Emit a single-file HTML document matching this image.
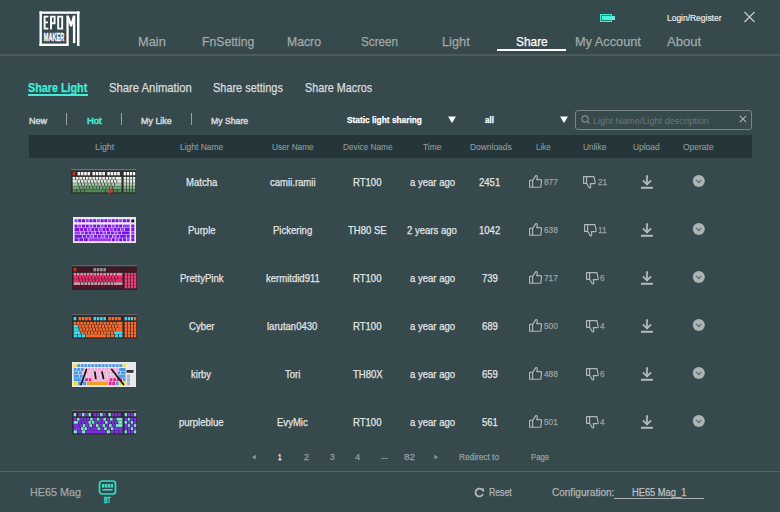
<!DOCTYPE html>
<html><head><meta charset="utf-8"><style>
html,body{margin:0;padding:0;}
body{width:780px;height:512px;overflow:hidden;position:relative;background:#36494d;font-family:"Liberation Sans",sans-serif;}
.t{position:absolute;white-space:nowrap;transform-origin:0 0;-webkit-text-stroke:0.25px currentColor;}
.r{position:absolute;}
</style></head><body>
<svg class="r" style="left:0;top:0" width="100" height="60" viewBox="0 0 100 60">
<g fill="#ffffff">
<rect x="39.5" y="11.5" width="40" height="2.3"/>
<rect x="39.5" y="11.5" width="2.4" height="34.5"/>
<rect x="39.5" y="43.6" width="29" height="2.4"/>
<rect x="77" y="11.5" width="2.5" height="34.5"/>
<rect x="66.4" y="15.7" width="2.3" height="30"/>
<rect x="72.9" y="15.7" width="2.4" height="27.5"/>
<path d="M66.4 15.7 H68.9 L71.1 22 L72.9 15.7 H75.3 L72 26.5 H70.2 Z"/>
</g>
<g stroke="#ffffff" stroke-width="1.9" fill="none">
<path d="M48.4 16.6 H44.6 V28.6 H48.4 M44.6 22.4 H48"/>
<path d="M51 29.4 V16.6 H54.6 V23.2 H51"/>
<path d="M58.2 16.6 H62.2 V28.6 H58.2 Z"/>
</g>
<text x="43.8" y="40.8" font-family="Liberation Sans" font-weight="bold" font-size="10" fill="#ffffff" stroke="#ffffff" stroke-width="0.35" textLength="20.4" lengthAdjust="spacingAndGlyphs">MAKER</text>
</svg>
<span class="t" style="left:137.90px;top:35.02px;font-size:13.5px;line-height:13.5px;color:#a3a9a9;transform:scaleX(0.9498);">Main</span>
<span class="t" style="left:201.50px;top:35.02px;font-size:13.5px;line-height:13.5px;color:#a3a9a9;transform:scaleX(0.9052);">FnSetting</span>
<span class="t" style="left:287.00px;top:35.02px;font-size:13.5px;line-height:13.5px;color:#a3a9a9;transform:scaleX(0.9066);">Macro</span>
<span class="t" style="left:361.00px;top:35.02px;font-size:13.5px;line-height:13.5px;color:#a3a9a9;transform:scaleX(0.8651);">Screen</span>
<span class="t" style="left:441.80px;top:35.02px;font-size:13.5px;line-height:13.5px;color:#a3a9a9;transform:scaleX(0.9464);">Light</span>
<span class="t" style="left:574.60px;top:35.02px;font-size:13.5px;line-height:13.5px;color:#a3a9a9;transform:scaleX(0.9444);">My Account</span>
<span class="t" style="left:666.70px;top:35.02px;font-size:13.5px;line-height:13.5px;color:#a3a9a9;transform:scaleX(0.9667);">About</span>
<span class="t" style="left:516.00px;top:35.02px;font-size:13.5px;line-height:13.5px;color:#ffffff;transform:scaleX(0.8801);">Share</span>
<div class="r" style="left:497px;top:49px;width:69px;height:2px;background:#ffffff;"></div>
<div class="r" style="left:0px;top:54px;width:780px;height:2px;background:#4e5a5b;"></div>
<div class="r" style="left:600px;top:14px;width:12px;height:8px;background:#38ecd0;"></div>
<div class="r" style="left:601px;top:15px;width:10px;height:6px;background:#2a8276;"></div>
<div class="r" style="left:602px;top:16px;width:9px;height:4px;background:#48f0d8;"></div>
<div class="r" style="left:612px;top:16px;width:3.3px;height:4.4px;background:#70e8d4;"></div>
<span class="t" style="left:667.00px;top:13.75px;font-size:8.3px;line-height:8.3px;color:#e6e9e9;transform:scaleX(1.0183);-webkit-text-stroke:0.2px #e6e9e9;">Login/Register</span>
<svg class="r" style="left:743px;top:11px" width="13" height="12" viewBox="0 0 13 12"><path d="M1.5 1 L11.5 11 M11.5 1 L1.5 11" stroke="#c5caca" stroke-width="1.3"/></svg>
<span class="t" style="left:28.40px;top:81.63px;font-size:12.2px;line-height:12.2px;color:#40ecd8;font-weight:bold;transform:scaleX(0.8836);">Share Light</span>
<div class="r" style="left:28px;top:94px;width:60px;height:2px;background:#40ecd8;"></div>
<span class="t" style="left:108.50px;top:81.63px;font-size:12.2px;line-height:12.2px;color:#d9dddd;transform:scaleX(0.9249);">Share Animation</span>
<span class="t" style="left:213.30px;top:81.63px;font-size:12.2px;line-height:12.2px;color:#d9dddd;transform:scaleX(0.8975);">Share settings</span>
<span class="t" style="left:304.60px;top:81.63px;font-size:12.2px;line-height:12.2px;color:#d9dddd;transform:scaleX(0.8849);">Share Macros</span>
<span class="t" style="left:29.00px;top:115.84px;font-size:9.6px;line-height:9.6px;color:#cdd2d2;transform:scaleX(0.9465);-webkit-text-stroke:0.55px currentColor;">New</span>
<span class="t" style="left:86.70px;top:115.84px;font-size:9.6px;line-height:9.6px;color:#40ecd8;transform:scaleX(0.9841);-webkit-text-stroke:0.55px currentColor;">Hot</span>
<span class="t" style="left:140.80px;top:115.84px;font-size:9.6px;line-height:9.6px;color:#cdd2d2;transform:scaleX(0.9313);-webkit-text-stroke:0.55px currentColor;">My Like</span>
<span class="t" style="left:211.30px;top:115.84px;font-size:9.6px;line-height:9.6px;color:#cdd2d2;transform:scaleX(0.9056);-webkit-text-stroke:0.55px currentColor;">My Share</span>
<div class="r" style="left:66px;top:113px;width:1px;height:12px;background:#9aa3a3;"></div>
<div class="r" style="left:121px;top:113px;width:1px;height:12px;background:#9aa3a3;"></div>
<div class="r" style="left:191px;top:113px;width:1px;height:12px;background:#9aa3a3;"></div>
<span class="t" style="left:347.30px;top:115.34px;font-size:9.6px;line-height:9.6px;color:#ffffff;font-weight:bold;transform:scaleX(0.8680);">Static light sharing</span>
<span class="t" style="left:485.00px;top:115.34px;font-size:9.6px;line-height:9.6px;color:#ffffff;font-weight:bold;transform:scaleX(0.8431);">all</span>
<svg class="r" style="left:447px;top:115px" width="10" height="9"><path d="M1 1.5 H9 L5 8 Z" fill="#ffffff"/></svg>
<svg class="r" style="left:559px;top:115px" width="10" height="9"><path d="M1 1.5 H9 L5 8 Z" fill="#ffffff"/></svg>
<div class="r" style="left:575px;top:110px;width:175px;height:17.5px;border:1px solid #7a8586;border-radius:3px;"></div>
<svg class="r" style="left:580px;top:114px" width="11" height="11"><circle cx="5" cy="5" r="3.1" stroke="#889191" stroke-width="1.1" fill="none"/><path d="M7.3 7.3 L9.3 9.3" stroke="#889191" stroke-width="1.2"/></svg>
<span class="t" style="left:593.00px;top:115.64px;font-size:9.6px;line-height:9.6px;color:#6c7778;transform:scaleX(0.9526);-webkit-text-stroke:0;">Light Name/Light description</span>
<svg class="r" style="left:738px;top:114px" width="10" height="10"><path d="M1.8 1.8 L8.2 8.2 M8.2 1.8 L1.8 8.2" stroke="#aab1b1" stroke-width="1.2"/></svg>
<div class="r" style="left:29px;top:135px;width:723px;height:22.5px;background:#24363a;"></div>
<span class="t" style="left:95.00px;top:142.88px;font-size:9.2px;line-height:9.2px;color:#939c9c;transform:scaleX(0.9676);-webkit-text-stroke:0.1px currentColor;">Light</span>
<span class="t" style="left:180.00px;top:142.88px;font-size:9.2px;line-height:9.2px;color:#939c9c;transform:scaleX(0.9203);-webkit-text-stroke:0.1px currentColor;">Light Name</span>
<span class="t" style="left:271.70px;top:142.88px;font-size:9.2px;line-height:9.2px;color:#939c9c;transform:scaleX(0.8942);-webkit-text-stroke:0.1px currentColor;">User Name</span>
<span class="t" style="left:342.70px;top:142.88px;font-size:9.2px;line-height:9.2px;color:#939c9c;transform:scaleX(0.8983);-webkit-text-stroke:0.1px currentColor;">Device Name</span>
<span class="t" style="left:423.30px;top:142.88px;font-size:9.2px;line-height:9.2px;color:#939c9c;transform:scaleX(0.9153);-webkit-text-stroke:0.1px currentColor;">Time</span>
<span class="t" style="left:470.00px;top:142.88px;font-size:9.2px;line-height:9.2px;color:#939c9c;transform:scaleX(0.9162);-webkit-text-stroke:0.1px currentColor;">Downloads</span>
<span class="t" style="left:536.00px;top:142.88px;font-size:9.2px;line-height:9.2px;color:#939c9c;transform:scaleX(0.8712);-webkit-text-stroke:0.1px currentColor;">Like</span>
<span class="t" style="left:583.30px;top:142.88px;font-size:9.2px;line-height:9.2px;color:#939c9c;transform:scaleX(0.9152);-webkit-text-stroke:0.1px currentColor;">Unlike</span>
<span class="t" style="left:633.30px;top:142.88px;font-size:9.2px;line-height:9.2px;color:#939c9c;transform:scaleX(0.9158);-webkit-text-stroke:0.1px currentColor;">Upload</span>
<span class="t" style="left:683.30px;top:142.88px;font-size:9.2px;line-height:9.2px;color:#939c9c;transform:scaleX(0.9236);-webkit-text-stroke:0.1px currentColor;">Operate</span>
<span class="t" style="left:185.85px;top:176.99px;font-size:10.6px;line-height:10.6px;color:#e3e6e6;transform:scaleX(0.9000);">Matcha</span>
<span class="t" style="left:269.71px;top:176.99px;font-size:10.6px;line-height:10.6px;color:#e3e6e6;transform:scaleX(0.9000);">camii.ramii</span>
<span class="t" style="left:353.27px;top:176.99px;font-size:10.6px;line-height:10.6px;color:#e3e6e6;transform:scaleX(0.9000);">RT100</span>
<span class="t" style="left:409.66px;top:176.99px;font-size:10.6px;line-height:10.6px;color:#e3e6e6;transform:scaleX(0.9000);">a year ago</span>
<span class="t" style="left:479.49px;top:176.99px;font-size:10.6px;line-height:10.6px;color:#e3e6e6;transform:scaleX(0.9000);">2451</span>
<svg class="r" style="left:528px;top:173.9px" width="15" height="15" viewBox="0 0 15 15"><g fill="none" stroke="#b3b9b9" stroke-width="1.15" stroke-linejoin="round"><rect x="1.6" y="6.2" width="3" height="7"/><path d="M4.6 6.4 L7.9 1.6 Q9.4 1.4 9.3 3.2 L8.8 5.6 H12.8 Q13.8 5.8 13.6 6.8 L12.8 13.2 H4.6"/></g></svg>
<span class="t" style="left:544.00px;top:177.55px;font-size:9.0px;line-height:9.0px;color:#99a1a1;transform:scaleX(0.9193);">877</span>
<svg class="r" style="left:582.40px;top:175px" width="15" height="15" viewBox="0 0 15 15"><g fill="none" stroke="#b3b9b9" stroke-width="1.15" stroke-linejoin="round"><rect x="1.6" y="1.6" width="3" height="6.8"/><path d="M4.6 8.2 L7.3 12.8 Q8.8 13 8.7 11.2 L8.4 8.6 H12.4 Q13.4 8.4 13.2 7.4 L11.9 1.6 H4.6"/></g></svg>
<span class="t" style="left:598.10px;top:177.75px;font-size:9.0px;line-height:9.0px;color:#99a1a1;transform:scaleX(0.9200);">21</span>
<svg class="r" style="left:640px;top:174px" width="14" height="16" viewBox="0 0 14 16"><path d="M7 1.3 V10" stroke="#b3b9b9" stroke-width="1.8"/><path d="M2.9 6.3 L7 10.4 L11.1 6.3" stroke="#b3b9b9" stroke-width="1.8" fill="none"/><rect x="1" y="12.8" width="12" height="2" fill="#b3b9b9"/></svg>
<svg class="r" style="left:692px;top:174px" width="14" height="14" viewBox="0 0 14 14"><circle cx="6.8" cy="7" r="6" fill="#adb3b3"/><path d="M4.2 6 L6.8 8.5 L9.4 6" stroke="#667172" stroke-width="1.4" fill="none"/></svg>
<svg class="r" style="left:71.3px;top:169px" width="65" height="24.5" viewBox="0 0 65 24.5"><rect x="0" y="0" width="65" height="24.5" fill="#2c2e2c"/><rect x="0" y="0" width="65" height="1.2" fill="#70746f"/><rect x="1.65" y="3.0" width="2.60" height="3.3" fill="#d42a2a"/><rect x="6.60" y="3.0" width="2.60" height="3.3" fill="#f6f6f6"/><rect x="9.90" y="3.0" width="2.60" height="3.3" fill="#f6f6f6"/><rect x="13.20" y="3.0" width="2.60" height="3.3" fill="#f6f6f6"/><rect x="16.50" y="3.0" width="2.60" height="3.3" fill="#f6f6f6"/><rect x="21.45" y="3.0" width="2.60" height="3.3" fill="#f6f6f6"/><rect x="24.75" y="3.0" width="2.60" height="3.3" fill="#f6f6f6"/><rect x="28.05" y="3.0" width="2.60" height="3.3" fill="#f6f6f6"/><rect x="31.35" y="3.0" width="2.60" height="3.3" fill="#f6f6f6"/><rect x="36.30" y="3.0" width="2.60" height="3.3" fill="#f6f6f6"/><rect x="39.60" y="3.0" width="2.60" height="3.3" fill="#f6f6f6"/><rect x="42.90" y="3.0" width="2.60" height="3.3" fill="#f6f6f6"/><rect x="46.20" y="3.0" width="2.60" height="3.3" fill="#f6f6f6"/><rect x="1.65" y="7.9" width="2.60" height="2.8" fill="#eef0ee"/><rect x="4.95" y="7.9" width="2.60" height="2.8" fill="#eef0ee"/><rect x="8.25" y="7.9" width="2.60" height="2.8" fill="#eef0ee"/><rect x="11.55" y="7.9" width="2.60" height="2.8" fill="#eef0ee"/><rect x="14.85" y="7.9" width="2.60" height="2.8" fill="#eef0ee"/><rect x="18.15" y="7.9" width="2.60" height="2.8" fill="#eef0ee"/><rect x="21.45" y="7.9" width="2.60" height="2.8" fill="#eef0ee"/><rect x="24.75" y="7.9" width="2.60" height="2.8" fill="#eef0ee"/><rect x="28.05" y="7.9" width="2.60" height="2.8" fill="#eef0ee"/><rect x="31.35" y="7.9" width="2.60" height="2.8" fill="#eef0ee"/><rect x="34.65" y="7.9" width="2.60" height="2.8" fill="#eef0ee"/><rect x="37.95" y="7.9" width="2.60" height="2.8" fill="#eef0ee"/><rect x="41.25" y="7.9" width="2.60" height="2.8" fill="#eef0ee"/><rect x="44.55" y="7.9" width="5.90" height="2.8" fill="#eef0ee"/><rect x="1.65" y="11.0" width="4.25" height="2.8" fill="#dfe8df"/><rect x="6.60" y="11.0" width="2.60" height="2.8" fill="#dfe8df"/><rect x="9.90" y="11.0" width="2.60" height="2.8" fill="#dfe8df"/><rect x="13.20" y="11.0" width="2.60" height="2.8" fill="#dfe8df"/><rect x="16.50" y="11.0" width="2.60" height="2.8" fill="#dfe8df"/><rect x="19.80" y="11.0" width="2.60" height="2.8" fill="#dfe8df"/><rect x="23.10" y="11.0" width="2.60" height="2.8" fill="#dfe8df"/><rect x="26.40" y="11.0" width="2.60" height="2.8" fill="#dfe8df"/><rect x="29.70" y="11.0" width="2.60" height="2.8" fill="#dfe8df"/><rect x="33.00" y="11.0" width="2.60" height="2.8" fill="#dfe8df"/><rect x="36.30" y="11.0" width="2.60" height="2.8" fill="#dfe8df"/><rect x="39.60" y="11.0" width="2.60" height="2.8" fill="#dfe8df"/><rect x="42.90" y="11.0" width="2.60" height="2.8" fill="#dfe8df"/><rect x="46.20" y="11.0" width="4.25" height="2.8" fill="#dfe8df"/><rect x="1.65" y="14.1" width="5.07" height="2.8" fill="#a8c8aa"/><rect x="7.42" y="14.1" width="2.60" height="2.8" fill="#a8c8aa"/><rect x="10.72" y="14.1" width="2.60" height="2.8" fill="#a8c8aa"/><rect x="14.03" y="14.1" width="2.60" height="2.8" fill="#a8c8aa"/><rect x="17.32" y="14.1" width="2.60" height="2.8" fill="#a8c8aa"/><rect x="20.62" y="14.1" width="2.60" height="2.8" fill="#a8c8aa"/><rect x="23.93" y="14.1" width="2.60" height="2.8" fill="#a8c8aa"/><rect x="27.23" y="14.1" width="2.60" height="2.8" fill="#a8c8aa"/><rect x="30.53" y="14.1" width="2.60" height="2.8" fill="#a8c8aa"/><rect x="33.82" y="14.1" width="2.60" height="2.8" fill="#a8c8aa"/><rect x="37.12" y="14.1" width="2.60" height="2.8" fill="#a8c8aa"/><rect x="40.42" y="14.1" width="2.60" height="2.8" fill="#a8c8aa"/><rect x="43.72" y="14.1" width="6.72" height="2.8" fill="#a8c8aa"/><rect x="1.65" y="17.2" width="6.72" height="2.8" fill="#72a077"/><rect x="9.07" y="17.2" width="2.60" height="2.8" fill="#72a077"/><rect x="12.38" y="17.2" width="2.60" height="2.8" fill="#72a077"/><rect x="15.67" y="17.2" width="2.60" height="2.8" fill="#72a077"/><rect x="18.98" y="17.2" width="2.60" height="2.8" fill="#72a077"/><rect x="22.28" y="17.2" width="2.60" height="2.8" fill="#72a077"/><rect x="25.57" y="17.2" width="2.60" height="2.8" fill="#72a077"/><rect x="28.88" y="17.2" width="2.60" height="2.8" fill="#72a077"/><rect x="32.17" y="17.2" width="2.60" height="2.8" fill="#72a077"/><rect x="35.47" y="17.2" width="2.60" height="2.8" fill="#72a077"/><rect x="38.77" y="17.2" width="2.60" height="2.8" fill="#72a077"/><rect x="42.07" y="17.2" width="8.38" height="2.8" fill="#72a077"/><rect x="1.65" y="20.3" width="3.42" height="3.0" fill="#4f8a56"/><rect x="5.77" y="20.3" width="3.42" height="3.0" fill="#4f8a56"/><rect x="9.90" y="20.3" width="3.42" height="3.0" fill="#4f8a56"/><rect x="14.03" y="20.3" width="19.93" height="3.0" fill="#4f8a56"/><rect x="34.65" y="20.3" width="3.42" height="3.0" fill="#4f8a56"/><rect x="38.77" y="20.3" width="3.42" height="3.0" fill="#4f8a56"/><rect x="42.90" y="20.3" width="3.42" height="3.0" fill="#4f8a56"/><rect x="47.02" y="20.3" width="3.42" height="3.0" fill="#4f8a56"/><rect x="52.63" y="3.0" width="2.37" height="3.3" fill="#f6f6f6"/><rect x="55.70" y="3.0" width="2.37" height="3.3" fill="#f6f6f6"/><rect x="58.77" y="3.0" width="2.37" height="3.3" fill="#f6f6f6"/><rect x="61.84" y="3.0" width="2.37" height="3.3" fill="#f6f6f6"/><rect x="52.63" y="7.9" width="2.37" height="2.8" fill="#eef0ee"/><rect x="55.70" y="7.9" width="2.37" height="2.8" fill="#eef0ee"/><rect x="58.77" y="7.9" width="2.37" height="2.8" fill="#eef0ee"/><rect x="61.84" y="7.9" width="2.37" height="2.8" fill="#eef0ee"/><rect x="52.63" y="11.0" width="2.37" height="2.8" fill="#dfe8df"/><rect x="55.70" y="11.0" width="2.37" height="2.8" fill="#dfe8df"/><rect x="58.77" y="11.0" width="2.37" height="2.8" fill="#dfe8df"/><rect x="61.84" y="11.0" width="2.37" height="2.8" fill="#dfe8df"/><rect x="52.63" y="14.1" width="2.37" height="2.8" fill="#b8d0b8"/><rect x="55.70" y="14.1" width="2.37" height="2.8" fill="#b8d0b8"/><rect x="58.77" y="14.1" width="2.37" height="2.8" fill="#b8d0b8"/><rect x="61.84" y="14.1" width="2.37" height="2.8" fill="#b8d0b8"/><rect x="52.63" y="17.2" width="2.37" height="2.8" fill="#8ab08c"/><rect x="55.70" y="17.2" width="2.37" height="2.8" fill="#8ab08c"/><rect x="58.77" y="17.2" width="2.37" height="2.8" fill="#8ab08c"/><rect x="61.84" y="17.2" width="2.37" height="2.8" fill="#8ab08c"/><rect x="52.63" y="20.3" width="2.37" height="3.0" fill="#5f9464"/><rect x="55.70" y="20.3" width="2.37" height="3.0" fill="#5f9464"/><rect x="58.77" y="20.3" width="2.37" height="3.0" fill="#5f9464"/><rect x="61.84" y="20.3" width="2.37" height="3.0" fill="#5f9464"/><rect x="37.5" y="19.5" width="2.2" height="5" fill="#d03030"/><rect x="40.5" y="19.5" width="1.2" height="4" fill="#c83030"/></svg>
<span class="t" style="left:187.71px;top:224.99px;font-size:10.6px;line-height:10.6px;color:#e3e6e6;transform:scaleX(0.9000);">Purple</span>
<span class="t" style="left:272.88px;top:224.99px;font-size:10.6px;line-height:10.6px;color:#e3e6e6;transform:scaleX(0.9000);">Pickering</span>
<span class="t" style="left:348.15px;top:224.99px;font-size:10.6px;line-height:10.6px;color:#e3e6e6;transform:scaleX(0.9000);">TH80 SE</span>
<span class="t" style="left:407.27px;top:224.99px;font-size:10.6px;line-height:10.6px;color:#e3e6e6;transform:scaleX(0.9000);">2 years ago</span>
<span class="t" style="left:479.49px;top:224.99px;font-size:10.6px;line-height:10.6px;color:#e3e6e6;transform:scaleX(0.9000);">1042</span>
<svg class="r" style="left:528px;top:221.9px" width="15" height="15" viewBox="0 0 15 15"><g fill="none" stroke="#b3b9b9" stroke-width="1.15" stroke-linejoin="round"><rect x="1.6" y="6.2" width="3" height="7"/><path d="M4.6 6.4 L7.9 1.6 Q9.4 1.4 9.3 3.2 L8.8 5.6 H12.8 Q13.8 5.8 13.6 6.8 L12.8 13.2 H4.6"/></g></svg>
<span class="t" style="left:544.00px;top:225.55px;font-size:9.0px;line-height:9.0px;color:#99a1a1;transform:scaleX(0.9193);">638</span>
<svg class="r" style="left:582.70px;top:223px" width="15" height="15" viewBox="0 0 15 15"><g fill="none" stroke="#b3b9b9" stroke-width="1.15" stroke-linejoin="round"><rect x="1.6" y="1.6" width="3" height="6.8"/><path d="M4.6 8.2 L7.3 12.8 Q8.8 13 8.7 11.2 L8.4 8.6 H12.4 Q13.4 8.4 13.2 7.4 L11.9 1.6 H4.6"/></g></svg>
<span class="t" style="left:598.40px;top:225.75px;font-size:9.0px;line-height:9.0px;color:#99a1a1;transform:scaleX(0.9200);">11</span>
<svg class="r" style="left:640px;top:222px" width="14" height="16" viewBox="0 0 14 16"><path d="M7 1.3 V10" stroke="#b3b9b9" stroke-width="1.8"/><path d="M2.9 6.3 L7 10.4 L11.1 6.3" stroke="#b3b9b9" stroke-width="1.8" fill="none"/><rect x="1" y="12.8" width="12" height="2" fill="#b3b9b9"/></svg>
<svg class="r" style="left:692px;top:222px" width="14" height="14" viewBox="0 0 14 14"><circle cx="6.8" cy="7" r="6" fill="#adb3b3"/><path d="M4.2 6 L6.8 8.5 L9.4 6" stroke="#667172" stroke-width="1.4" fill="none"/></svg>
<svg class="r" style="left:72.5px;top:216.5px" width="63" height="26" viewBox="0 0 63 26"><rect x="0" y="0" width="63" height="26" fill="#ece6f0"/><rect x="1.55" y="2.2" width="3.02" height="3.0" fill="#9a3cf4"/><rect x="5.27" y="2.2" width="3.02" height="3.0" fill="#7a12e6"/><rect x="8.99" y="2.2" width="3.02" height="3.0" fill="#7a12e6"/><rect x="12.71" y="2.2" width="3.02" height="3.0" fill="#9a3cf4"/><rect x="16.43" y="2.2" width="3.02" height="3.0" fill="#7a12e6"/><rect x="20.15" y="2.2" width="3.02" height="3.0" fill="#7a12e6"/><rect x="23.87" y="2.2" width="3.02" height="3.0" fill="#9a3cf4"/><rect x="27.59" y="2.2" width="3.02" height="3.0" fill="#7a12e6"/><rect x="31.31" y="2.2" width="3.02" height="3.0" fill="#7a12e6"/><rect x="35.03" y="2.2" width="3.02" height="3.0" fill="#9a3cf4"/><rect x="38.75" y="2.2" width="3.02" height="3.0" fill="#7a12e6"/><rect x="42.47" y="2.2" width="3.02" height="3.0" fill="#7a12e6"/><rect x="46.19" y="2.2" width="3.02" height="3.0" fill="#9a3cf4"/><rect x="49.91" y="2.2" width="3.02" height="3.0" fill="#7a12e6"/><rect x="53.63" y="2.2" width="3.02" height="3.0" fill="#7a12e6"/><rect x="1.55" y="7.6" width="3.02" height="3.0" fill="#7a12e6"/><rect x="5.27" y="7.6" width="3.02" height="3.0" fill="#9a3cf4"/><rect x="8.99" y="7.6" width="3.02" height="3.0" fill="#7a12e6"/><rect x="12.71" y="7.6" width="3.02" height="3.0" fill="#7a12e6"/><rect x="16.43" y="7.6" width="3.02" height="3.0" fill="#9a3cf4"/><rect x="20.15" y="7.6" width="3.02" height="3.0" fill="#7a12e6"/><rect x="23.87" y="7.6" width="3.02" height="3.0" fill="#7a12e6"/><rect x="27.59" y="7.6" width="3.02" height="3.0" fill="#9a3cf4"/><rect x="31.31" y="7.6" width="3.02" height="3.0" fill="#7a12e6"/><rect x="35.03" y="7.6" width="3.02" height="3.0" fill="#7a12e6"/><rect x="38.75" y="7.6" width="3.02" height="3.0" fill="#9a3cf4"/><rect x="42.47" y="7.6" width="3.02" height="3.0" fill="#7a12e6"/><rect x="46.19" y="7.6" width="3.02" height="3.0" fill="#7a12e6"/><rect x="49.91" y="7.6" width="6.74" height="3.0" fill="#9a3cf4"/><rect x="1.55" y="11.0" width="4.88" height="3.0" fill="#7a12e6"/><rect x="7.13" y="11.0" width="3.02" height="3.0" fill="#7a12e6"/><rect x="10.85" y="11.0" width="3.02" height="3.0" fill="#7a12e6"/><rect x="14.57" y="11.0" width="3.02" height="3.0" fill="#9a3cf4"/><rect x="18.29" y="11.0" width="3.02" height="3.0" fill="#7a12e6"/><rect x="22.01" y="11.0" width="3.02" height="3.0" fill="#7a12e6"/><rect x="25.73" y="11.0" width="3.02" height="3.0" fill="#9a3cf4"/><rect x="29.45" y="11.0" width="3.02" height="3.0" fill="#7a12e6"/><rect x="33.17" y="11.0" width="3.02" height="3.0" fill="#7a12e6"/><rect x="36.89" y="11.0" width="3.02" height="3.0" fill="#9a3cf4"/><rect x="40.61" y="11.0" width="3.02" height="3.0" fill="#7a12e6"/><rect x="44.33" y="11.0" width="3.02" height="3.0" fill="#7a12e6"/><rect x="48.05" y="11.0" width="3.02" height="3.0" fill="#9a3cf4"/><rect x="51.77" y="11.0" width="4.88" height="3.0" fill="#7a12e6"/><rect x="1.55" y="14.4" width="5.81" height="3.0" fill="#9a3cf4"/><rect x="8.06" y="14.4" width="3.02" height="3.0" fill="#9a3cf4"/><rect x="11.78" y="14.4" width="3.02" height="3.0" fill="#7a12e6"/><rect x="15.50" y="14.4" width="3.02" height="3.0" fill="#7a12e6"/><rect x="19.22" y="14.4" width="3.02" height="3.0" fill="#9a3cf4"/><rect x="22.94" y="14.4" width="3.02" height="3.0" fill="#7a12e6"/><rect x="26.66" y="14.4" width="3.02" height="3.0" fill="#7a12e6"/><rect x="30.38" y="14.4" width="3.02" height="3.0" fill="#9a3cf4"/><rect x="34.10" y="14.4" width="3.02" height="3.0" fill="#7a12e6"/><rect x="37.82" y="14.4" width="3.02" height="3.0" fill="#7a12e6"/><rect x="41.54" y="14.4" width="3.02" height="3.0" fill="#9a3cf4"/><rect x="45.26" y="14.4" width="3.02" height="3.0" fill="#7a12e6"/><rect x="48.98" y="14.4" width="7.67" height="3.0" fill="#7a12e6"/><rect x="1.55" y="17.8" width="7.67" height="3.0" fill="#7a12e6"/><rect x="9.92" y="17.8" width="3.02" height="3.0" fill="#7a12e6"/><rect x="13.64" y="17.8" width="3.02" height="3.0" fill="#7a12e6"/><rect x="17.36" y="17.8" width="3.02" height="3.0" fill="#9a3cf4"/><rect x="21.08" y="17.8" width="3.02" height="3.0" fill="#7a12e6"/><rect x="24.80" y="17.8" width="3.02" height="3.0" fill="#7a12e6"/><rect x="28.52" y="17.8" width="3.02" height="3.0" fill="#9a3cf4"/><rect x="32.24" y="17.8" width="3.02" height="3.0" fill="#7a12e6"/><rect x="35.96" y="17.8" width="3.02" height="3.0" fill="#7a12e6"/><rect x="39.68" y="17.8" width="3.02" height="3.0" fill="#9a3cf4"/><rect x="43.40" y="17.8" width="3.02" height="3.0" fill="#7a12e6"/><rect x="47.12" y="17.8" width="5.81" height="3.0" fill="#7a12e6"/><rect x="53.63" y="17.8" width="3.02" height="3.0" fill="#7a12e6"/><rect x="1.55" y="21.2" width="3.95" height="3.0" fill="#7a12e6"/><rect x="6.20" y="21.2" width="3.95" height="3.0" fill="#7a12e6"/><rect x="10.85" y="21.2" width="3.95" height="3.0" fill="#7a12e6"/><rect x="15.50" y="21.2" width="22.55" height="3.0" fill="#9a3cf4"/><rect x="38.75" y="21.2" width="3.02" height="3.0" fill="#7a12e6"/><rect x="42.47" y="21.2" width="3.02" height="3.0" fill="#9a3cf4"/><rect x="46.19" y="21.2" width="3.02" height="3.0" fill="#7a12e6"/><rect x="49.91" y="21.2" width="3.02" height="3.0" fill="#7a12e6"/><rect x="53.63" y="21.2" width="3.02" height="3.0" fill="#9a3cf4"/><rect x="58.28" y="7.6" width="3.02" height="3.0" fill="#7a12e6"/><rect x="58.28" y="11.0" width="3.02" height="3.0" fill="#7a12e6"/><rect x="58.28" y="14.4" width="3.02" height="3.0" fill="#9a3cf4"/><rect x="58.28" y="17.8" width="3.02" height="3.0" fill="#7a12e6"/><rect x="58.28" y="21.2" width="3.02" height="3.0" fill="#7a12e6"/><circle cx="59.8" cy="3.9" r="1.6" fill="#111"/></svg>
<span class="t" style="left:179.75px;top:272.99px;font-size:10.6px;line-height:10.6px;color:#e3e6e6;transform:scaleX(0.9000);">PrettyPink</span>
<span class="t" style="left:265.54px;top:272.99px;font-size:10.6px;line-height:10.6px;color:#e3e6e6;transform:scaleX(0.9000);">kermitdid911</span>
<span class="t" style="left:353.27px;top:272.99px;font-size:10.6px;line-height:10.6px;color:#e3e6e6;transform:scaleX(0.9000);">RT100</span>
<span class="t" style="left:409.66px;top:272.99px;font-size:10.6px;line-height:10.6px;color:#e3e6e6;transform:scaleX(0.9000);">a year ago</span>
<span class="t" style="left:482.14px;top:272.99px;font-size:10.6px;line-height:10.6px;color:#e3e6e6;transform:scaleX(0.9000);">739</span>
<svg class="r" style="left:528px;top:269.9px" width="15" height="15" viewBox="0 0 15 15"><g fill="none" stroke="#b3b9b9" stroke-width="1.15" stroke-linejoin="round"><rect x="1.6" y="6.2" width="3" height="7"/><path d="M4.6 6.4 L7.9 1.6 Q9.4 1.4 9.3 3.2 L8.8 5.6 H12.8 Q13.8 5.8 13.6 6.8 L12.8 13.2 H4.6"/></g></svg>
<span class="t" style="left:544.00px;top:273.55px;font-size:9.0px;line-height:9.0px;color:#99a1a1;transform:scaleX(0.9193);">717</span>
<svg class="r" style="left:584.70px;top:271px" width="15" height="15" viewBox="0 0 15 15"><g fill="none" stroke="#b3b9b9" stroke-width="1.15" stroke-linejoin="round"><rect x="1.6" y="1.6" width="3" height="6.8"/><path d="M4.6 8.2 L7.3 12.8 Q8.8 13 8.7 11.2 L8.4 8.6 H12.4 Q13.4 8.4 13.2 7.4 L11.9 1.6 H4.6"/></g></svg>
<span class="t" style="left:600.40px;top:273.75px;font-size:9.0px;line-height:9.0px;color:#99a1a1;transform:scaleX(0.9200);">6</span>
<svg class="r" style="left:640px;top:270px" width="14" height="16" viewBox="0 0 14 16"><path d="M7 1.3 V10" stroke="#b3b9b9" stroke-width="1.8"/><path d="M2.9 6.3 L7 10.4 L11.1 6.3" stroke="#b3b9b9" stroke-width="1.8" fill="none"/><rect x="1" y="12.8" width="12" height="2" fill="#b3b9b9"/></svg>
<svg class="r" style="left:692px;top:270px" width="14" height="14" viewBox="0 0 14 14"><circle cx="6.8" cy="7" r="6" fill="#adb3b3"/><path d="M4.2 6 L6.8 8.5 L9.4 6" stroke="#667172" stroke-width="1.4" fill="none"/></svg>
<svg class="r" style="left:71.5px;top:264.5px" width="65" height="25" viewBox="0 0 65 25"><rect x="0" y="0" width="65" height="25" fill="#2e2226"/><rect x="0" y="0" width="65" height="1.2" fill="#6a6265"/><rect x="1.65" y="3.0" width="2.60" height="3.3" fill="#e02a2a"/><rect x="6.60" y="3.0" width="2.60" height="3.3" fill="#4a1424"/><rect x="9.90" y="3.0" width="2.60" height="3.3" fill="#4a1424"/><rect x="13.20" y="3.0" width="2.60" height="3.3" fill="#4a1424"/><rect x="16.50" y="3.0" width="2.60" height="3.3" fill="#4a1424"/><rect x="21.45" y="3.0" width="2.60" height="3.3" fill="#9a8a90"/><rect x="24.75" y="3.0" width="2.60" height="3.3" fill="#9a8a90"/><rect x="28.05" y="3.0" width="2.60" height="3.3" fill="#9a8a90"/><rect x="31.35" y="3.0" width="2.60" height="3.3" fill="#9a8a90"/><rect x="36.30" y="3.0" width="2.60" height="3.3" fill="#4a1424"/><rect x="39.60" y="3.0" width="2.60" height="3.3" fill="#4a1424"/><rect x="42.90" y="3.0" width="2.60" height="3.3" fill="#4a1424"/><rect x="46.20" y="3.0" width="2.60" height="3.3" fill="#4a1424"/><rect x="1.65" y="7.9" width="2.60" height="2.8" fill="#ee86aa"/><rect x="4.95" y="7.9" width="2.60" height="2.8" fill="#ee86aa"/><rect x="8.25" y="7.9" width="2.60" height="2.8" fill="#ee86aa"/><rect x="11.55" y="7.9" width="2.60" height="2.8" fill="#ee86aa"/><rect x="14.85" y="7.9" width="2.60" height="2.8" fill="#ee86aa"/><rect x="18.15" y="7.9" width="2.60" height="2.8" fill="#ee86aa"/><rect x="21.45" y="7.9" width="2.60" height="2.8" fill="#ee86aa"/><rect x="24.75" y="7.9" width="2.60" height="2.8" fill="#ee86aa"/><rect x="28.05" y="7.9" width="2.60" height="2.8" fill="#ee86aa"/><rect x="31.35" y="7.9" width="2.60" height="2.8" fill="#ee86aa"/><rect x="34.65" y="7.9" width="2.60" height="2.8" fill="#ee86aa"/><rect x="37.95" y="7.9" width="2.60" height="2.8" fill="#ee86aa"/><rect x="41.25" y="7.9" width="2.60" height="2.8" fill="#ee86aa"/><rect x="44.55" y="7.9" width="5.90" height="2.8" fill="#ee86aa"/><rect x="1.65" y="11.0" width="4.25" height="2.8" fill="#ff2470"/><rect x="6.60" y="11.0" width="2.60" height="2.8" fill="#ff2470"/><rect x="9.90" y="11.0" width="2.60" height="2.8" fill="#ff2470"/><rect x="13.20" y="11.0" width="2.60" height="2.8" fill="#ff2470"/><rect x="16.50" y="11.0" width="2.60" height="2.8" fill="#ff2470"/><rect x="19.80" y="11.0" width="2.60" height="2.8" fill="#ff2470"/><rect x="23.10" y="11.0" width="2.60" height="2.8" fill="#ff2470"/><rect x="26.40" y="11.0" width="2.60" height="2.8" fill="#ff2470"/><rect x="29.70" y="11.0" width="2.60" height="2.8" fill="#ff2470"/><rect x="33.00" y="11.0" width="2.60" height="2.8" fill="#ff2470"/><rect x="36.30" y="11.0" width="2.60" height="2.8" fill="#ff2470"/><rect x="39.60" y="11.0" width="2.60" height="2.8" fill="#ff2470"/><rect x="42.90" y="11.0" width="2.60" height="2.8" fill="#ff2470"/><rect x="46.20" y="11.0" width="4.25" height="2.8" fill="#ff2470"/><rect x="1.65" y="14.1" width="5.07" height="2.8" fill="#ec2a6c"/><rect x="7.42" y="14.1" width="2.60" height="2.8" fill="#ec2a6c"/><rect x="10.72" y="14.1" width="2.60" height="2.8" fill="#ec2a6c"/><rect x="14.03" y="14.1" width="2.60" height="2.8" fill="#ec2a6c"/><rect x="17.32" y="14.1" width="2.60" height="2.8" fill="#ec2a6c"/><rect x="20.62" y="14.1" width="2.60" height="2.8" fill="#ec2a6c"/><rect x="23.93" y="14.1" width="2.60" height="2.8" fill="#ec2a6c"/><rect x="27.23" y="14.1" width="2.60" height="2.8" fill="#ec2a6c"/><rect x="30.53" y="14.1" width="2.60" height="2.8" fill="#ec2a6c"/><rect x="33.82" y="14.1" width="2.60" height="2.8" fill="#ec2a6c"/><rect x="37.12" y="14.1" width="2.60" height="2.8" fill="#ec2a6c"/><rect x="40.42" y="14.1" width="2.60" height="2.8" fill="#ec2a6c"/><rect x="43.72" y="14.1" width="6.72" height="2.8" fill="#ec2a6c"/><rect x="1.65" y="17.2" width="6.72" height="2.8" fill="#c89aab"/><rect x="9.07" y="17.2" width="2.60" height="2.8" fill="#c89aab"/><rect x="12.38" y="17.2" width="2.60" height="2.8" fill="#c89aab"/><rect x="15.67" y="17.2" width="2.60" height="2.8" fill="#c89aab"/><rect x="18.98" y="17.2" width="2.60" height="2.8" fill="#c89aab"/><rect x="22.28" y="17.2" width="2.60" height="2.8" fill="#c89aab"/><rect x="25.57" y="17.2" width="2.60" height="2.8" fill="#c89aab"/><rect x="28.88" y="17.2" width="2.60" height="2.8" fill="#c89aab"/><rect x="32.17" y="17.2" width="2.60" height="2.8" fill="#c89aab"/><rect x="35.47" y="17.2" width="2.60" height="2.8" fill="#c89aab"/><rect x="38.77" y="17.2" width="2.60" height="2.8" fill="#c89aab"/><rect x="42.07" y="17.2" width="8.38" height="2.8" fill="#c89aab"/><rect x="1.65" y="20.3" width="3.42" height="3.0" fill="#5e1228"/><rect x="5.77" y="20.3" width="3.42" height="3.0" fill="#5e1228"/><rect x="9.90" y="20.3" width="3.42" height="3.0" fill="#5e1228"/><rect x="14.03" y="20.3" width="19.93" height="3.0" fill="#5e1228"/><rect x="34.65" y="20.3" width="3.42" height="3.0" fill="#5e1228"/><rect x="38.77" y="20.3" width="3.42" height="3.0" fill="#5e1228"/><rect x="42.90" y="20.3" width="3.42" height="3.0" fill="#5e1228"/><rect x="47.02" y="20.3" width="3.42" height="3.0" fill="#5e1228"/><rect x="52.63" y="3.0" width="2.37" height="3.3" fill="#4a1424"/><rect x="55.70" y="3.0" width="2.37" height="3.3" fill="#4a1424"/><rect x="58.77" y="3.0" width="2.37" height="3.3" fill="#4a1424"/><rect x="61.84" y="3.0" width="2.37" height="3.3" fill="#4a1424"/><rect x="52.63" y="7.9" width="2.37" height="2.8" fill="#f0407c"/><rect x="55.70" y="7.9" width="2.37" height="2.8" fill="#f0407c"/><rect x="58.77" y="7.9" width="2.37" height="2.8" fill="#f0407c"/><rect x="61.84" y="7.9" width="2.37" height="2.8" fill="#f0407c"/><rect x="52.63" y="11.0" width="2.37" height="2.8" fill="#f0407c"/><rect x="55.70" y="11.0" width="2.37" height="2.8" fill="#f0407c"/><rect x="58.77" y="11.0" width="2.37" height="2.8" fill="#f0407c"/><rect x="61.84" y="11.0" width="2.37" height="2.8" fill="#f0407c"/><rect x="52.63" y="14.1" width="2.37" height="2.8" fill="#f0407c"/><rect x="55.70" y="14.1" width="2.37" height="2.8" fill="#f0407c"/><rect x="58.77" y="14.1" width="2.37" height="2.8" fill="#f0407c"/><rect x="61.84" y="14.1" width="2.37" height="2.8" fill="#f0407c"/><rect x="52.63" y="17.2" width="2.37" height="2.8" fill="#f0407c"/><rect x="55.70" y="17.2" width="2.37" height="2.8" fill="#f0407c"/><rect x="58.77" y="17.2" width="2.37" height="2.8" fill="#f0407c"/><rect x="61.84" y="17.2" width="2.37" height="2.8" fill="#f0407c"/><rect x="52.63" y="20.3" width="2.37" height="3.0" fill="#f0407c"/><rect x="55.70" y="20.3" width="2.37" height="3.0" fill="#f0407c"/><rect x="58.77" y="20.3" width="2.37" height="3.0" fill="#f0407c"/><rect x="61.84" y="20.3" width="2.37" height="3.0" fill="#f0407c"/></svg>
<span class="t" style="left:188.77px;top:320.99px;font-size:10.6px;line-height:10.6px;color:#e3e6e6;transform:scaleX(0.9000);">Cyber</span>
<span class="t" style="left:267.30px;top:320.99px;font-size:10.6px;line-height:10.6px;color:#e3e6e6;transform:scaleX(0.9000);">larutan0430</span>
<span class="t" style="left:353.27px;top:320.99px;font-size:10.6px;line-height:10.6px;color:#e3e6e6;transform:scaleX(0.9000);">RT100</span>
<span class="t" style="left:409.66px;top:320.99px;font-size:10.6px;line-height:10.6px;color:#e3e6e6;transform:scaleX(0.9000);">a year ago</span>
<span class="t" style="left:482.14px;top:320.99px;font-size:10.6px;line-height:10.6px;color:#e3e6e6;transform:scaleX(0.9000);">689</span>
<svg class="r" style="left:528px;top:317.9px" width="15" height="15" viewBox="0 0 15 15"><g fill="none" stroke="#b3b9b9" stroke-width="1.15" stroke-linejoin="round"><rect x="1.6" y="6.2" width="3" height="7"/><path d="M4.6 6.4 L7.9 1.6 Q9.4 1.4 9.3 3.2 L8.8 5.6 H12.8 Q13.8 5.8 13.6 6.8 L12.8 13.2 H4.6"/></g></svg>
<span class="t" style="left:544.00px;top:321.55px;font-size:9.0px;line-height:9.0px;color:#99a1a1;transform:scaleX(0.9193);">500</span>
<svg class="r" style="left:584.70px;top:319px" width="15" height="15" viewBox="0 0 15 15"><g fill="none" stroke="#b3b9b9" stroke-width="1.15" stroke-linejoin="round"><rect x="1.6" y="1.6" width="3" height="6.8"/><path d="M4.6 8.2 L7.3 12.8 Q8.8 13 8.7 11.2 L8.4 8.6 H12.4 Q13.4 8.4 13.2 7.4 L11.9 1.6 H4.6"/></g></svg>
<span class="t" style="left:600.40px;top:321.75px;font-size:9.0px;line-height:9.0px;color:#99a1a1;transform:scaleX(0.9200);">4</span>
<svg class="r" style="left:640px;top:318px" width="14" height="16" viewBox="0 0 14 16"><path d="M7 1.3 V10" stroke="#b3b9b9" stroke-width="1.8"/><path d="M2.9 6.3 L7 10.4 L11.1 6.3" stroke="#b3b9b9" stroke-width="1.8" fill="none"/><rect x="1" y="12.8" width="12" height="2" fill="#b3b9b9"/></svg>
<svg class="r" style="left:692px;top:318px" width="14" height="14" viewBox="0 0 14 14"><circle cx="6.8" cy="7" r="6" fill="#adb3b3"/><path d="M4.2 6 L6.8 8.5 L9.4 6" stroke="#667172" stroke-width="1.4" fill="none"/></svg>
<svg class="r" style="left:71.5px;top:314px" width="65" height="24.5" viewBox="0 0 65 24.5"><rect x="0" y="0" width="65" height="24.5" fill="#2a2a30"/><rect x="0" y="0" width="65" height="1.2" fill="#5e5e62"/><rect x="1.65" y="3.0" width="2.60" height="3.3" fill="#3ad8ea"/><rect x="6.60" y="3.0" width="2.60" height="3.3" fill="#ff6a24"/><rect x="9.90" y="3.0" width="2.60" height="3.3" fill="#ff6a24"/><rect x="13.20" y="3.0" width="2.60" height="3.3" fill="#ff6a24"/><rect x="16.50" y="3.0" width="2.60" height="3.3" fill="#ff6a24"/><rect x="21.45" y="3.0" width="2.60" height="3.3" fill="#3ad8ea"/><rect x="24.75" y="3.0" width="2.60" height="3.3" fill="#3ad8ea"/><rect x="28.05" y="3.0" width="2.60" height="3.3" fill="#3ad8ea"/><rect x="31.35" y="3.0" width="2.60" height="3.3" fill="#3ad8ea"/><rect x="36.30" y="3.0" width="2.60" height="3.3" fill="#ff6a24"/><rect x="39.60" y="3.0" width="2.60" height="3.3" fill="#ff6a24"/><rect x="42.90" y="3.0" width="2.60" height="3.3" fill="#ff6a24"/><rect x="46.20" y="3.0" width="2.60" height="3.3" fill="#ff6a24"/><rect x="1.65" y="7.9" width="2.60" height="2.8" fill="#ff6a24"/><rect x="4.95" y="7.9" width="2.60" height="2.8" fill="#ff6a24"/><rect x="8.25" y="7.9" width="2.60" height="2.8" fill="#ff6a24"/><rect x="11.55" y="7.9" width="2.60" height="2.8" fill="#ff6a24"/><rect x="14.85" y="7.9" width="2.60" height="2.8" fill="#ff6a24"/><rect x="18.15" y="7.9" width="2.60" height="2.8" fill="#ff6a24"/><rect x="21.45" y="7.9" width="2.60" height="2.8" fill="#ff6a24"/><rect x="24.75" y="7.9" width="2.60" height="2.8" fill="#ff6a24"/><rect x="28.05" y="7.9" width="2.60" height="2.8" fill="#ff6a24"/><rect x="31.35" y="7.9" width="2.60" height="2.8" fill="#ff6a24"/><rect x="34.65" y="7.9" width="2.60" height="2.8" fill="#ff6a24"/><rect x="37.95" y="7.9" width="2.60" height="2.8" fill="#ff6a24"/><rect x="41.25" y="7.9" width="2.60" height="2.8" fill="#ff6a24"/><rect x="44.55" y="7.9" width="5.90" height="2.8" fill="#ff6a24"/><rect x="1.65" y="11.0" width="4.25" height="2.8" fill="#3ad8ea"/><rect x="6.60" y="11.0" width="2.60" height="2.8" fill="#ff6a24"/><rect x="9.90" y="11.0" width="2.60" height="2.8" fill="#ff6a24"/><rect x="13.20" y="11.0" width="2.60" height="2.8" fill="#ff6a24"/><rect x="16.50" y="11.0" width="2.60" height="2.8" fill="#ff6a24"/><rect x="19.80" y="11.0" width="2.60" height="2.8" fill="#ff6a24"/><rect x="23.10" y="11.0" width="2.60" height="2.8" fill="#ff6a24"/><rect x="26.40" y="11.0" width="2.60" height="2.8" fill="#ff6a24"/><rect x="29.70" y="11.0" width="2.60" height="2.8" fill="#ff6a24"/><rect x="33.00" y="11.0" width="2.60" height="2.8" fill="#ff6a24"/><rect x="36.30" y="11.0" width="2.60" height="2.8" fill="#ff6a24"/><rect x="39.60" y="11.0" width="2.60" height="2.8" fill="#ff6a24"/><rect x="42.90" y="11.0" width="2.60" height="2.8" fill="#ff6a24"/><rect x="46.20" y="11.0" width="4.25" height="2.8" fill="#ff6a24"/><rect x="1.65" y="14.1" width="5.07" height="2.8" fill="#3ad8ea"/><rect x="7.42" y="14.1" width="2.60" height="2.8" fill="#ff6a24"/><rect x="10.72" y="14.1" width="2.60" height="2.8" fill="#ff6a24"/><rect x="14.03" y="14.1" width="2.60" height="2.8" fill="#ff6a24"/><rect x="17.32" y="14.1" width="2.60" height="2.8" fill="#ff6a24"/><rect x="20.62" y="14.1" width="2.60" height="2.8" fill="#ff6a24"/><rect x="23.93" y="14.1" width="2.60" height="2.8" fill="#ff6a24"/><rect x="27.23" y="14.1" width="2.60" height="2.8" fill="#ff6a24"/><rect x="30.53" y="14.1" width="2.60" height="2.8" fill="#ff6a24"/><rect x="33.82" y="14.1" width="2.60" height="2.8" fill="#ff6a24"/><rect x="37.12" y="14.1" width="2.60" height="2.8" fill="#ff6a24"/><rect x="40.42" y="14.1" width="2.60" height="2.8" fill="#ff6a24"/><rect x="43.72" y="14.1" width="6.72" height="2.8" fill="#ff6a24"/><rect x="1.65" y="17.2" width="6.72" height="2.8" fill="#3ad8ea"/><rect x="9.07" y="17.2" width="2.60" height="2.8" fill="#ff6a24"/><rect x="12.38" y="17.2" width="2.60" height="2.8" fill="#ff6a24"/><rect x="15.67" y="17.2" width="2.60" height="2.8" fill="#ff6a24"/><rect x="18.98" y="17.2" width="2.60" height="2.8" fill="#ff6a24"/><rect x="22.28" y="17.2" width="2.60" height="2.8" fill="#ff6a24"/><rect x="25.57" y="17.2" width="2.60" height="2.8" fill="#ff6a24"/><rect x="28.88" y="17.2" width="2.60" height="2.8" fill="#ff6a24"/><rect x="32.17" y="17.2" width="2.60" height="2.8" fill="#ff6a24"/><rect x="35.47" y="17.2" width="2.60" height="2.8" fill="#ff6a24"/><rect x="38.77" y="17.2" width="2.60" height="2.8" fill="#ff6a24"/><rect x="42.07" y="17.2" width="8.38" height="2.8" fill="#3ad8ea"/><rect x="1.65" y="20.3" width="3.42" height="3.0" fill="#3ad8ea"/><rect x="5.77" y="20.3" width="3.42" height="3.0" fill="#3ad8ea"/><rect x="9.90" y="20.3" width="3.42" height="3.0" fill="#3ad8ea"/><rect x="14.03" y="20.3" width="19.93" height="3.0" fill="#ff6a24"/><rect x="34.65" y="20.3" width="3.42" height="3.0" fill="#ff6a24"/><rect x="38.77" y="20.3" width="3.42" height="3.0" fill="#ff6a24"/><rect x="42.90" y="20.3" width="3.42" height="3.0" fill="#3ad8ea"/><rect x="47.02" y="20.3" width="3.42" height="3.0" fill="#3ad8ea"/><rect x="52.63" y="3.0" width="2.37" height="3.3" fill="#3ad8ea"/><rect x="55.70" y="3.0" width="2.37" height="3.3" fill="#3ad8ea"/><rect x="58.77" y="3.0" width="2.37" height="3.3" fill="#3ad8ea"/><rect x="61.84" y="3.0" width="2.37" height="3.3" fill="#ff6a24"/><rect x="52.63" y="7.9" width="2.37" height="2.8" fill="#ff6a24"/><rect x="55.70" y="7.9" width="2.37" height="2.8" fill="#ff6a24"/><rect x="58.77" y="7.9" width="2.37" height="2.8" fill="#ff6a24"/><rect x="61.84" y="7.9" width="2.37" height="2.8" fill="#ff6a24"/><rect x="52.63" y="11.0" width="2.37" height="2.8" fill="#ff6a24"/><rect x="55.70" y="11.0" width="2.37" height="2.8" fill="#ff6a24"/><rect x="58.77" y="11.0" width="2.37" height="2.8" fill="#ff6a24"/><rect x="61.84" y="11.0" width="2.37" height="2.8" fill="#ff6a24"/><rect x="52.63" y="14.1" width="2.37" height="2.8" fill="#ff6a24"/><rect x="55.70" y="14.1" width="2.37" height="2.8" fill="#ff6a24"/><rect x="58.77" y="14.1" width="2.37" height="2.8" fill="#ff6a24"/><rect x="61.84" y="14.1" width="2.37" height="2.8" fill="#ff6a24"/><rect x="52.63" y="17.2" width="2.37" height="2.8" fill="#ff6a24"/><rect x="55.70" y="17.2" width="2.37" height="2.8" fill="#ff6a24"/><rect x="58.77" y="17.2" width="2.37" height="2.8" fill="#ff6a24"/><rect x="61.84" y="17.2" width="2.37" height="2.8" fill="#ff6a24"/><rect x="52.63" y="20.3" width="2.37" height="3.0" fill="#ff6a24"/><rect x="55.70" y="20.3" width="2.37" height="3.0" fill="#ff6a24"/><rect x="58.77" y="20.3" width="2.37" height="3.0" fill="#ff6a24"/><rect x="61.84" y="20.3" width="2.37" height="3.0" fill="#ff6a24"/></svg>
<span class="t" style="left:191.43px;top:368.99px;font-size:10.6px;line-height:10.6px;color:#e3e6e6;transform:scaleX(0.9000);">kirby</span>
<span class="t" style="left:284.82px;top:368.99px;font-size:10.6px;line-height:10.6px;color:#e3e6e6;transform:scaleX(0.9000);">Tori</span>
<span class="t" style="left:352.66px;top:368.99px;font-size:10.6px;line-height:10.6px;color:#e3e6e6;transform:scaleX(0.9000);">TH80X</span>
<span class="t" style="left:409.66px;top:368.99px;font-size:10.6px;line-height:10.6px;color:#e3e6e6;transform:scaleX(0.9000);">a year ago</span>
<span class="t" style="left:482.14px;top:368.99px;font-size:10.6px;line-height:10.6px;color:#e3e6e6;transform:scaleX(0.9000);">659</span>
<svg class="r" style="left:528px;top:365.9px" width="15" height="15" viewBox="0 0 15 15"><g fill="none" stroke="#b3b9b9" stroke-width="1.15" stroke-linejoin="round"><rect x="1.6" y="6.2" width="3" height="7"/><path d="M4.6 6.4 L7.9 1.6 Q9.4 1.4 9.3 3.2 L8.8 5.6 H12.8 Q13.8 5.8 13.6 6.8 L12.8 13.2 H4.6"/></g></svg>
<span class="t" style="left:544.00px;top:369.55px;font-size:9.0px;line-height:9.0px;color:#99a1a1;transform:scaleX(0.9193);">488</span>
<svg class="r" style="left:584.70px;top:367px" width="15" height="15" viewBox="0 0 15 15"><g fill="none" stroke="#b3b9b9" stroke-width="1.15" stroke-linejoin="round"><rect x="1.6" y="1.6" width="3" height="6.8"/><path d="M4.6 8.2 L7.3 12.8 Q8.8 13 8.7 11.2 L8.4 8.6 H12.4 Q13.4 8.4 13.2 7.4 L11.9 1.6 H4.6"/></g></svg>
<span class="t" style="left:600.40px;top:369.75px;font-size:9.0px;line-height:9.0px;color:#99a1a1;transform:scaleX(0.9200);">6</span>
<svg class="r" style="left:640px;top:366px" width="14" height="16" viewBox="0 0 14 16"><path d="M7 1.3 V10" stroke="#b3b9b9" stroke-width="1.8"/><path d="M2.9 6.3 L7 10.4 L11.1 6.3" stroke="#b3b9b9" stroke-width="1.8" fill="none"/><rect x="1" y="12.8" width="12" height="2" fill="#b3b9b9"/></svg>
<svg class="r" style="left:692px;top:366px" width="14" height="14" viewBox="0 0 14 14"><circle cx="6.8" cy="7" r="6" fill="#adb3b3"/><path d="M4.2 6 L6.8 8.5 L9.4 6" stroke="#667172" stroke-width="1.4" fill="none"/></svg>
<svg class="r" style="left:71.5px;top:361.5px" width="64" height="25.5" viewBox="0 0 64 25.5"><rect x="0" y="0" width="64" height="25.5" fill="#e8e8e8"/><rect x="1.75" y="2.2" width="2.80" height="2.8" fill="#f4e020"/><rect x="5.25" y="2.2" width="2.80" height="2.8" fill="#4a98ea"/><rect x="8.75" y="2.2" width="2.80" height="2.8" fill="#4a98ea"/><rect x="12.25" y="2.2" width="2.80" height="2.8" fill="#4a98ea"/><rect x="15.75" y="2.2" width="2.80" height="2.8" fill="#4a98ea"/><rect x="19.25" y="2.2" width="2.80" height="2.8" fill="#4a98ea"/><rect x="22.75" y="2.2" width="2.80" height="2.8" fill="#4a98ea"/><rect x="26.25" y="2.2" width="2.80" height="2.8" fill="#4a98ea"/><rect x="29.75" y="2.2" width="2.80" height="2.8" fill="#4a98ea"/><rect x="33.25" y="2.2" width="2.80" height="2.8" fill="#4a98ea"/><rect x="36.75" y="2.2" width="2.80" height="2.8" fill="#4a98ea"/><rect x="40.25" y="2.2" width="2.80" height="2.8" fill="#4a98ea"/><rect x="43.75" y="2.2" width="2.80" height="2.8" fill="#4a98ea"/><rect x="47.25" y="2.2" width="2.80" height="2.8" fill="#4a98ea"/><rect x="50.75" y="2.2" width="2.80" height="2.8" fill="#f4e020"/><rect x="1.75" y="6.0" width="2.80" height="3.0" fill="#4a98ea"/><rect x="5.25" y="6.0" width="2.80" height="3.0" fill="#4a98ea"/><rect x="8.75" y="6.0" width="2.80" height="3.0" fill="#4a98ea"/><rect x="12.25" y="6.0" width="2.80" height="3.0" fill="#f4a6d6"/><rect x="15.75" y="6.0" width="2.80" height="3.0" fill="#f4a6d6"/><rect x="19.25" y="6.0" width="2.80" height="3.0" fill="#f4a6d6"/><rect x="22.75" y="6.0" width="2.80" height="3.0" fill="#f4a6d6"/><rect x="26.25" y="6.0" width="2.80" height="3.0" fill="#f4a6d6"/><rect x="29.75" y="6.0" width="2.80" height="3.0" fill="#f4a6d6"/><rect x="33.25" y="6.0" width="2.80" height="3.0" fill="#f4a6d6"/><rect x="36.75" y="6.0" width="2.80" height="3.0" fill="#f4a6d6"/><rect x="40.25" y="6.0" width="2.80" height="3.0" fill="#f4a6d6"/><rect x="43.75" y="6.0" width="2.80" height="3.0" fill="#f4a6d6"/><rect x="47.25" y="6.0" width="6.30" height="3.0" fill="#4a98ea"/><rect x="1.75" y="9.4" width="4.55" height="3.0" fill="#4a98ea"/><rect x="7.00" y="9.4" width="2.80" height="3.0" fill="#4a98ea"/><rect x="10.50" y="9.4" width="2.80" height="3.0" fill="#f4a6d6"/><rect x="14.00" y="9.4" width="2.80" height="3.0" fill="#f4a6d6"/><rect x="17.50" y="9.4" width="2.80" height="3.0" fill="#f4a6d6"/><rect x="21.00" y="9.4" width="2.80" height="3.0" fill="#f4a6d6"/><rect x="24.50" y="9.4" width="2.80" height="3.0" fill="#f4a6d6"/><rect x="28.00" y="9.4" width="2.80" height="3.0" fill="#f4a6d6"/><rect x="31.50" y="9.4" width="2.80" height="3.0" fill="#f4a6d6"/><rect x="35.00" y="9.4" width="2.80" height="3.0" fill="#f4a6d6"/><rect x="38.50" y="9.4" width="2.80" height="3.0" fill="#f4a6d6"/><rect x="42.00" y="9.4" width="2.80" height="3.0" fill="#f4a6d6"/><rect x="45.50" y="9.4" width="2.80" height="3.0" fill="#4a98ea"/><rect x="49.00" y="9.4" width="4.55" height="3.0" fill="#4a98ea"/><rect x="1.75" y="12.8" width="5.42" height="3.0" fill="#4a98ea"/><rect x="7.88" y="12.8" width="2.80" height="3.0" fill="#4a98ea"/><rect x="11.38" y="12.8" width="2.80" height="3.0" fill="#f4a6d6"/><rect x="14.88" y="12.8" width="2.80" height="3.0" fill="#f4a6d6"/><rect x="18.38" y="12.8" width="2.80" height="3.0" fill="#f4a6d6"/><rect x="21.88" y="12.8" width="2.80" height="3.0" fill="#f4a6d6"/><rect x="25.38" y="12.8" width="2.80" height="3.0" fill="#f4a6d6"/><rect x="28.88" y="12.8" width="2.80" height="3.0" fill="#f4a6d6"/><rect x="32.38" y="12.8" width="2.80" height="3.0" fill="#f4a6d6"/><rect x="35.88" y="12.8" width="2.80" height="3.0" fill="#f4a6d6"/><rect x="39.38" y="12.8" width="2.80" height="3.0" fill="#f4a6d6"/><rect x="42.88" y="12.8" width="2.80" height="3.0" fill="#f4a6d6"/><rect x="46.38" y="12.8" width="7.17" height="3.0" fill="#4a98ea"/><rect x="1.75" y="16.2" width="7.17" height="3.0" fill="#4a98ea"/><rect x="9.62" y="16.2" width="2.80" height="3.0" fill="#4a98ea"/><rect x="13.12" y="16.2" width="2.80" height="3.0" fill="#e8208a"/><rect x="16.62" y="16.2" width="2.80" height="3.0" fill="#e8208a"/><rect x="20.12" y="16.2" width="2.80" height="3.0" fill="#f4a6d6"/><rect x="23.62" y="16.2" width="2.80" height="3.0" fill="#f4a6d6"/><rect x="27.12" y="16.2" width="2.80" height="3.0" fill="#f4a6d6"/><rect x="30.62" y="16.2" width="2.80" height="3.0" fill="#f4a6d6"/><rect x="34.12" y="16.2" width="2.80" height="3.0" fill="#f4a6d6"/><rect x="37.62" y="16.2" width="2.80" height="3.0" fill="#e8208a"/><rect x="41.12" y="16.2" width="2.80" height="3.0" fill="#e8208a"/><rect x="44.62" y="16.2" width="5.42" height="3.0" fill="#e8208a"/><rect x="50.75" y="16.2" width="2.80" height="3.0" fill="#4a98ea"/><rect x="1.75" y="19.6" width="3.67" height="3.6" fill="#f4e020"/><rect x="6.12" y="19.6" width="3.67" height="3.6" fill="#4a98ea"/><rect x="10.50" y="19.6" width="3.67" height="3.6" fill="#4a98ea"/><rect x="14.88" y="19.6" width="21.18" height="3.6" fill="#f0a020"/><rect x="36.75" y="19.6" width="2.80" height="3.6" fill="#e8208a"/><rect x="40.25" y="19.6" width="2.80" height="3.6" fill="#e8208a"/><rect x="43.75" y="19.6" width="2.80" height="3.6" fill="#4a98ea"/><rect x="47.25" y="19.6" width="2.80" height="3.6" fill="#f4e020"/><rect x="50.75" y="19.6" width="2.80" height="3.6" fill="#f4e020"/><rect x="55.12" y="12.8" width="2.80" height="3.0" fill="#9ab0c8"/><rect x="55.12" y="16.2" width="2.80" height="3.0" fill="#9ab0c8"/><rect x="55.12" y="19.6" width="2.80" height="3.6" fill="#9ab0c8"/><g stroke="#111" stroke-width="1.7" stroke-linecap="round" fill="none"><path d="M14.5 7.5 L9 22.5"/><path d="M22.8 10 L23.8 16.5"/><path d="M30 10 L31.5 16.5"/><path d="M39.8 7.5 L51.5 22.5"/></g><rect x="54.5" y="8" width="7" height="2.8" fill="#333"/></svg>
<span class="t" style="left:179.22px;top:416.99px;font-size:10.6px;line-height:10.6px;color:#e3e6e6;transform:scaleX(0.9000);">purpleblue</span>
<span class="t" style="left:277.13px;top:416.99px;font-size:10.6px;line-height:10.6px;color:#e3e6e6;transform:scaleX(0.9000);">EvyMic</span>
<span class="t" style="left:353.27px;top:416.99px;font-size:10.6px;line-height:10.6px;color:#e3e6e6;transform:scaleX(0.9000);">RT100</span>
<span class="t" style="left:409.66px;top:416.99px;font-size:10.6px;line-height:10.6px;color:#e3e6e6;transform:scaleX(0.9000);">a year ago</span>
<span class="t" style="left:482.14px;top:416.99px;font-size:10.6px;line-height:10.6px;color:#e3e6e6;transform:scaleX(0.9000);">561</span>
<svg class="r" style="left:528px;top:413.9px" width="15" height="15" viewBox="0 0 15 15"><g fill="none" stroke="#b3b9b9" stroke-width="1.15" stroke-linejoin="round"><rect x="1.6" y="6.2" width="3" height="7"/><path d="M4.6 6.4 L7.9 1.6 Q9.4 1.4 9.3 3.2 L8.8 5.6 H12.8 Q13.8 5.8 13.6 6.8 L12.8 13.2 H4.6"/></g></svg>
<span class="t" style="left:544.00px;top:417.55px;font-size:9.0px;line-height:9.0px;color:#99a1a1;transform:scaleX(0.9193);">501</span>
<svg class="r" style="left:584.70px;top:415px" width="15" height="15" viewBox="0 0 15 15"><g fill="none" stroke="#b3b9b9" stroke-width="1.15" stroke-linejoin="round"><rect x="1.6" y="1.6" width="3" height="6.8"/><path d="M4.6 8.2 L7.3 12.8 Q8.8 13 8.7 11.2 L8.4 8.6 H12.4 Q13.4 8.4 13.2 7.4 L11.9 1.6 H4.6"/></g></svg>
<span class="t" style="left:600.40px;top:417.75px;font-size:9.0px;line-height:9.0px;color:#99a1a1;transform:scaleX(0.9200);">4</span>
<svg class="r" style="left:640px;top:414px" width="14" height="16" viewBox="0 0 14 16"><path d="M7 1.3 V10" stroke="#b3b9b9" stroke-width="1.8"/><path d="M2.9 6.3 L7 10.4 L11.1 6.3" stroke="#b3b9b9" stroke-width="1.8" fill="none"/><rect x="1" y="12.8" width="12" height="2" fill="#b3b9b9"/></svg>
<svg class="r" style="left:692px;top:414px" width="14" height="14" viewBox="0 0 14 14"><circle cx="6.8" cy="7" r="6" fill="#adb3b3"/><path d="M4.2 6 L6.8 8.5 L9.4 6" stroke="#667172" stroke-width="1.4" fill="none"/></svg>
<svg class="r" style="left:71.5px;top:410px" width="65" height="24.5" viewBox="0 0 65 24.5"><rect x="0" y="0" width="65" height="24.5" fill="#2c2a34"/><rect x="0" y="0" width="65" height="1.2" fill="#5e5e62"/><rect x="1.65" y="3.0" width="2.60" height="3.3" fill="#78e8c8"/><rect x="6.60" y="3.0" width="2.60" height="3.3" fill="#8030f0"/><rect x="9.90" y="3.0" width="2.60" height="3.3" fill="#78e8c8"/><rect x="13.20" y="3.0" width="2.60" height="3.3" fill="#8030f0"/><rect x="16.50" y="3.0" width="2.60" height="3.3" fill="#78e8c8"/><rect x="21.45" y="3.0" width="2.60" height="3.3" fill="#8030f0"/><rect x="24.75" y="3.0" width="2.60" height="3.3" fill="#8030f0"/><rect x="28.05" y="3.0" width="2.60" height="3.3" fill="#78e8c8"/><rect x="31.35" y="3.0" width="2.60" height="3.3" fill="#8030f0"/><rect x="36.30" y="3.0" width="2.60" height="3.3" fill="#78e8c8"/><rect x="39.60" y="3.0" width="2.60" height="3.3" fill="#8030f0"/><rect x="42.90" y="3.0" width="2.60" height="3.3" fill="#8030f0"/><rect x="46.20" y="3.0" width="2.60" height="3.3" fill="#8030f0"/><rect x="1.65" y="7.9" width="2.60" height="2.8" fill="#8030f0"/><rect x="4.95" y="7.9" width="2.60" height="2.8" fill="#78e8c8"/><rect x="8.25" y="7.9" width="2.60" height="2.8" fill="#8030f0"/><rect x="11.55" y="7.9" width="2.60" height="2.8" fill="#8030f0"/><rect x="14.85" y="7.9" width="2.60" height="2.8" fill="#8030f0"/><rect x="18.15" y="7.9" width="2.60" height="2.8" fill="#78e8c8"/><rect x="21.45" y="7.9" width="2.60" height="2.8" fill="#8030f0"/><rect x="24.75" y="7.9" width="2.60" height="2.8" fill="#78e8c8"/><rect x="28.05" y="7.9" width="2.60" height="2.8" fill="#8030f0"/><rect x="31.35" y="7.9" width="2.60" height="2.8" fill="#78e8c8"/><rect x="34.65" y="7.9" width="2.60" height="2.8" fill="#8030f0"/><rect x="37.95" y="7.9" width="2.60" height="2.8" fill="#78e8c8"/><rect x="41.25" y="7.9" width="2.60" height="2.8" fill="#8030f0"/><rect x="44.55" y="7.9" width="5.90" height="2.8" fill="#78e8c8"/><rect x="1.65" y="11.0" width="4.25" height="2.8" fill="#78e8c8"/><rect x="6.60" y="11.0" width="2.60" height="2.8" fill="#8030f0"/><rect x="9.90" y="11.0" width="2.60" height="2.8" fill="#8030f0"/><rect x="13.20" y="11.0" width="2.60" height="2.8" fill="#8030f0"/><rect x="16.50" y="11.0" width="2.60" height="2.8" fill="#78e8c8"/><rect x="19.80" y="11.0" width="2.60" height="2.8" fill="#78e8c8"/><rect x="23.10" y="11.0" width="2.60" height="2.8" fill="#8030f0"/><rect x="26.40" y="11.0" width="2.60" height="2.8" fill="#8030f0"/><rect x="29.70" y="11.0" width="2.60" height="2.8" fill="#8030f0"/><rect x="33.00" y="11.0" width="2.60" height="2.8" fill="#78e8c8"/><rect x="36.30" y="11.0" width="2.60" height="2.8" fill="#8030f0"/><rect x="39.60" y="11.0" width="2.60" height="2.8" fill="#8030f0"/><rect x="42.90" y="11.0" width="2.60" height="2.8" fill="#8030f0"/><rect x="46.20" y="11.0" width="4.25" height="2.8" fill="#78e8c8"/><rect x="1.65" y="14.1" width="5.07" height="2.8" fill="#8030f0"/><rect x="7.42" y="14.1" width="2.60" height="2.8" fill="#8030f0"/><rect x="10.72" y="14.1" width="2.60" height="2.8" fill="#78e8c8"/><rect x="14.03" y="14.1" width="2.60" height="2.8" fill="#8030f0"/><rect x="17.32" y="14.1" width="2.60" height="2.8" fill="#78e8c8"/><rect x="20.62" y="14.1" width="2.60" height="2.8" fill="#8030f0"/><rect x="23.93" y="14.1" width="2.60" height="2.8" fill="#78e8c8"/><rect x="27.23" y="14.1" width="2.60" height="2.8" fill="#8030f0"/><rect x="30.53" y="14.1" width="2.60" height="2.8" fill="#78e8c8"/><rect x="33.82" y="14.1" width="2.60" height="2.8" fill="#8030f0"/><rect x="37.12" y="14.1" width="2.60" height="2.8" fill="#78e8c8"/><rect x="40.42" y="14.1" width="2.60" height="2.8" fill="#8030f0"/><rect x="43.72" y="14.1" width="6.72" height="2.8" fill="#78e8c8"/><rect x="1.65" y="17.2" width="6.72" height="2.8" fill="#8030f0"/><rect x="9.07" y="17.2" width="2.60" height="2.8" fill="#78e8c8"/><rect x="12.38" y="17.2" width="2.60" height="2.8" fill="#78e8c8"/><rect x="15.67" y="17.2" width="2.60" height="2.8" fill="#8030f0"/><rect x="18.98" y="17.2" width="2.60" height="2.8" fill="#8030f0"/><rect x="22.28" y="17.2" width="2.60" height="2.8" fill="#8030f0"/><rect x="25.57" y="17.2" width="2.60" height="2.8" fill="#78e8c8"/><rect x="28.88" y="17.2" width="2.60" height="2.8" fill="#8030f0"/><rect x="32.17" y="17.2" width="2.60" height="2.8" fill="#78e8c8"/><rect x="35.47" y="17.2" width="2.60" height="2.8" fill="#8030f0"/><rect x="38.77" y="17.2" width="2.60" height="2.8" fill="#78e8c8"/><rect x="42.07" y="17.2" width="8.38" height="2.8" fill="#8030f0"/><rect x="1.65" y="20.3" width="3.42" height="3.0" fill="#78e8c8"/><rect x="5.77" y="20.3" width="3.42" height="3.0" fill="#8030f0"/><rect x="9.90" y="20.3" width="3.42" height="3.0" fill="#78e8c8"/><rect x="14.03" y="20.3" width="19.93" height="3.0" fill="#7a2ae8"/><rect x="34.65" y="20.3" width="3.42" height="3.0" fill="#78e8c8"/><rect x="38.77" y="20.3" width="3.42" height="3.0" fill="#8030f0"/><rect x="42.90" y="20.3" width="3.42" height="3.0" fill="#8030f0"/><rect x="47.02" y="20.3" width="3.42" height="3.0" fill="#8030f0"/><rect x="52.63" y="3.0" width="2.37" height="3.3" fill="#78e8c8"/><rect x="55.70" y="3.0" width="2.37" height="3.3" fill="#8030f0"/><rect x="58.77" y="3.0" width="2.37" height="3.3" fill="#8030f0"/><rect x="61.84" y="3.0" width="2.37" height="3.3" fill="#78e8c8"/><rect x="52.63" y="7.9" width="2.37" height="2.8" fill="#8030f0"/><rect x="55.70" y="7.9" width="2.37" height="2.8" fill="#78e8c8"/><rect x="58.77" y="7.9" width="2.37" height="2.8" fill="#8030f0"/><rect x="61.84" y="7.9" width="2.37" height="2.8" fill="#8030f0"/><rect x="52.63" y="11.0" width="2.37" height="2.8" fill="#78e8c8"/><rect x="55.70" y="11.0" width="2.37" height="2.8" fill="#8030f0"/><rect x="58.77" y="11.0" width="2.37" height="2.8" fill="#78e8c8"/><rect x="61.84" y="11.0" width="2.37" height="2.8" fill="#8030f0"/><rect x="52.63" y="14.1" width="2.37" height="2.8" fill="#8030f0"/><rect x="55.70" y="14.1" width="2.37" height="2.8" fill="#78e8c8"/><rect x="58.77" y="14.1" width="2.37" height="2.8" fill="#8030f0"/><rect x="61.84" y="14.1" width="2.37" height="2.8" fill="#78e8c8"/><rect x="52.63" y="17.2" width="2.37" height="2.8" fill="#8030f0"/><rect x="55.70" y="17.2" width="2.37" height="2.8" fill="#8030f0"/><rect x="58.77" y="17.2" width="2.37" height="2.8" fill="#78e8c8"/><rect x="61.84" y="17.2" width="2.37" height="2.8" fill="#8030f0"/><rect x="52.63" y="20.3" width="2.37" height="3.0" fill="#78e8c8"/><rect x="55.70" y="20.3" width="2.37" height="3.0" fill="#8030f0"/><rect x="58.77" y="20.3" width="2.37" height="3.0" fill="#8030f0"/><rect x="61.84" y="20.3" width="2.37" height="3.0" fill="#78e8c8"/></svg>
<span class="t" style="left:278.00px;top:453.32px;font-size:8.8px;line-height:8.8px;color:#ffffff;transform:scaleX(0.7153);">1</span>
<span class="t" style="left:303.60px;top:453.32px;font-size:8.8px;line-height:8.8px;color:#979f9f;transform:scaleX(1.0423);">2</span>
<span class="t" style="left:329.70px;top:453.32px;font-size:8.8px;line-height:8.8px;color:#979f9f;transform:scaleX(0.9606);">3</span>
<span class="t" style="left:355.40px;top:453.32px;font-size:8.8px;line-height:8.8px;color:#979f9f;transform:scaleX(1.0423);">4</span>
<span class="t" style="left:404.00px;top:453.32px;font-size:8.8px;line-height:8.8px;color:#979f9f;transform:scaleX(1.1241);">82</span>
<div class="r" style="left:380.5px;top:458px;width:7px;height:1px;background:#7d8888;"></div>
<svg class="r" style="left:250px;top:453px" width="8" height="8"><path d="M5.8 1.7 L1.8 4.2 L5.8 6.2 Z" fill="#8f9898"/></svg>
<svg class="r" style="left:433px;top:453px" width="8" height="8"><path d="M1.4 1.7 L5.2 4.2 L1.4 6.2 Z" fill="#8f9898"/></svg>
<span class="t" style="left:459.00px;top:453.32px;font-size:8.8px;line-height:8.8px;color:#979f9f;transform:scaleX(0.9401);">Redirect to</span>
<span class="t" style="left:530.80px;top:453.32px;font-size:8.8px;line-height:8.8px;color:#979f9f;transform:scaleX(0.8760);">Page</span>
<div class="r" style="left:0px;top:471px;width:780px;height:1px;background:#56616a;"></div>
<span class="t" style="left:29.70px;top:486.95px;font-size:11.0px;line-height:11.0px;color:#a0a7a7;transform:scaleX(0.9832);">HE65 Mag</span>
<svg class="r" style="left:97px;top:478px" width="22" height="28" viewBox="0 0 22 28">
<rect x="2.5" y="3" width="16" height="13" rx="2.8" fill="none" stroke="#33dcc4" stroke-width="1.7"/>
<g fill="#33dcc4"><rect x="5" y="6" width="2.4" height="3.6"/><rect x="8" y="6" width="2.4" height="3.6"/><rect x="11" y="6" width="2.3" height="3.6"/><rect x="13.8" y="6" width="2.3" height="3.6"/>
<rect x="5.5" y="11" width="10" height="1.6"/></g>
<text x="7" y="25.2" font-family="Liberation Sans" font-weight="bold" font-size="8.8" fill="#33dcc4" stroke="#33dcc4" stroke-width="0.5" textLength="6.6" lengthAdjust="spacingAndGlyphs">BT</text>
</svg>
<svg class="r" style="left:473.5px;top:486.5px" width="11" height="11" viewBox="0 0 11 11"><path d="M8.9 3.8 A3.9 3.9 0 1 0 9.0 7.0" stroke="#b0b6b6" stroke-width="1.8" fill="none"/><path d="M6.2 1.6 L10.2 1.4 L9.9 5.2 Z" fill="#b0b6b6"/></svg>
<span class="t" style="left:489.30px;top:487.70px;font-size:10.0px;line-height:10.0px;color:#b0b6b6;transform:scaleX(0.8691);">Reset</span>
<span class="t" style="left:551.70px;top:487.70px;font-size:10.0px;line-height:10.0px;color:#b0b6b6;transform:scaleX(1.0006);">Configuration:</span>
<span class="t" style="left:631.70px;top:487.70px;font-size:10.0px;line-height:10.0px;color:#bcc1c1;transform:scaleX(0.9303);">HE65 Mag_1</span>
<div class="r" style="left:614px;top:497.5px;width:90px;height:1px;background:#aab0b0;"></div>
</body></html>
